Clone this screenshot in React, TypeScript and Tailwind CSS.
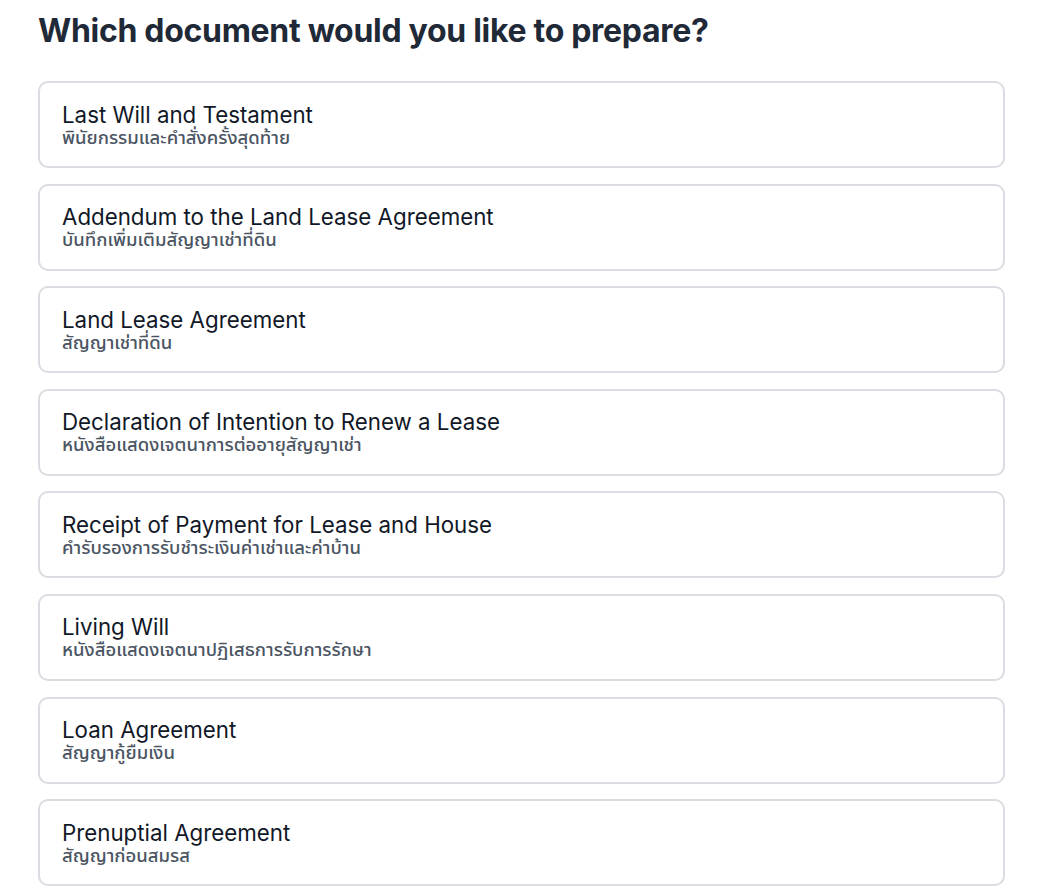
const documents = [
  { en: "Last Will and Testament", th: "พินัยกรรมและคำสั่งครั้งสุดท้าย" },
  { en: "Addendum to the Land Lease Agreement", th: "บันทึกเพิ่มเติมสัญญาเช่าที่ดิน" },
  { en: "Land Lease Agreement", th: "สัญญาเช่าที่ดิน" },
  { en: "Declaration of Intention to Renew a Lease", th: "หนังสือแสดงเจตนาการต่ออายุสัญญาเช่า" },
  { en: "Receipt of Payment for Lease and House", th: "คำรับรองการรับชำระเงินค่าเช่าและค่าบ้าน" },
  { en: "Living Will", th: "หนังสือแสดงเจตนาปฏิเสธการรับการรักษา" },
  { en: "Loan Agreement", th: "สัญญากู้ยืมเงิน" },
  { en: "Prenuptial Agreement", th: "สัญญาก่อนสมรส" },
];

export default function App() {
  return (
    <div className="min-h-screen bg-white pl-[38px] pr-[35px] pt-[11px] font-['Inter','Noto_Sans_Thai','Noto_Sans',sans-serif]">
      <h1 className="text-[32px] leading-[40px] font-bold text-[#1f2937] tracking-[-0.3px]">
        Which document would you like to prepare?
      </h1>

      <div className="mt-[30px] flex flex-col gap-[15.6px]">
        {documents.map((doc) => (
          <button
            key={doc.en}
            className="h-[87px] w-full rounded-[10px] border-2 border-[#d9dce1] bg-white px-[22px] text-left flex flex-col justify-center"
          >
            <span className="text-[22.3px] leading-[25px] text-[#111827]">{doc.en}</span>
            <span className="text-[18.5px] leading-[21px] font-medium text-[#4b5563]">{doc.th}</span>
          </button>
        ))}
      </div>
    </div>
  );
}
